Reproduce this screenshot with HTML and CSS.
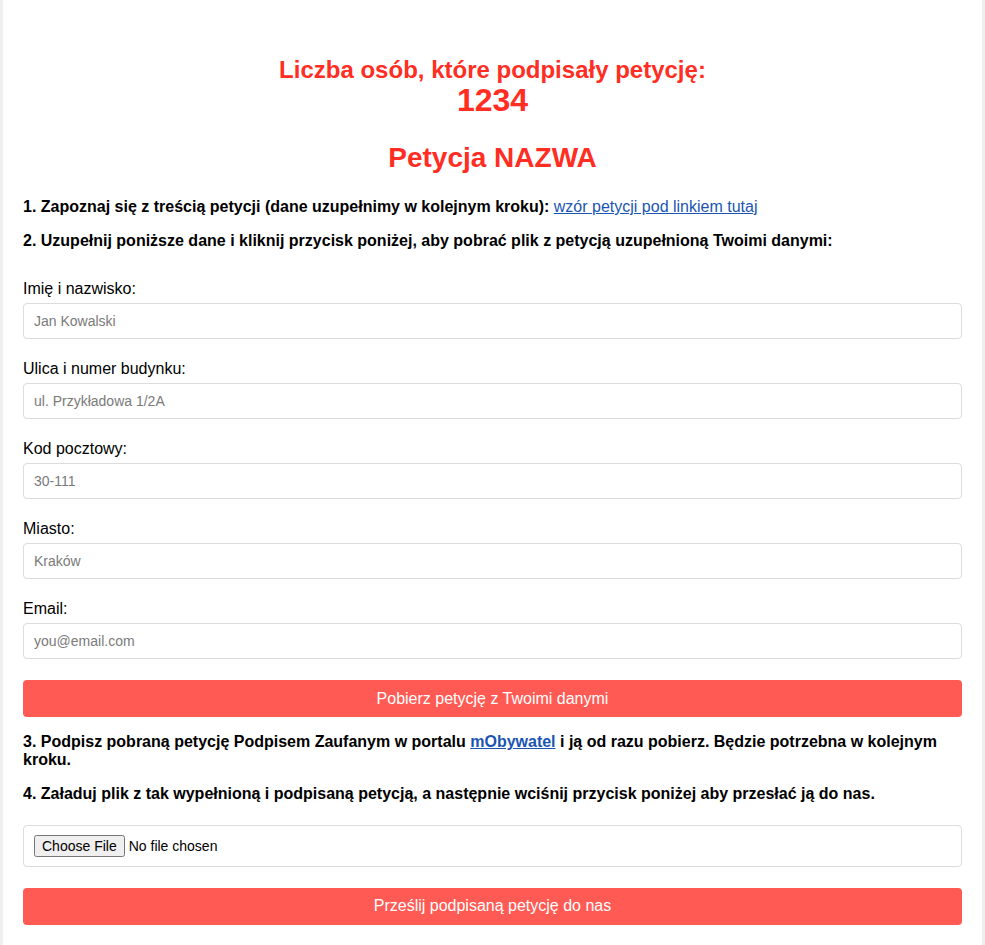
FILE: index.html
```html
<!DOCTYPE html>
<html lang="pl">
<head>
<meta charset="utf-8">
<title>Petycja</title>
<link rel="stylesheet" href="styles.css">
</head>
<body>
<div class="container">
  <div class="counter">
    <div class="counter-label">Liczba osób, które podpisały petycję:</div>
    <div class="counter-value">1234</div>
  </div>
  <h1 class="title">Petycja NAZWA</h1>
  <p class="step step-1">1. Zapoznaj się z treścią petycji (dane uzupełnimy w kolejnym kroku): <a href="#" class="link">wzór petycji pod linkiem tutaj</a></p>
  <p class="step step-2">2. Uzupełnij poniższe dane i kliknij przycisk poniżej, aby pobrać plik z petycją uzupełnioną Twoimi danymi:</p>
  <form class="form">
    <div class="group">
      <label class="label" for="name">Imię i nazwisko:</label>
      <input class="input" id="name" type="text" placeholder="Jan Kowalski">
    </div>
    <div class="group">
      <label class="label" for="street">Ulica i numer budynku:</label>
      <input class="input" id="street" type="text" placeholder="ul. Przykładowa 1/2A">
    </div>
    <div class="group">
      <label class="label" for="zip">Kod pocztowy:</label>
      <input class="input" id="zip" type="text" placeholder="30-111">
    </div>
    <div class="group">
      <label class="label" for="city">Miasto:</label>
      <input class="input" id="city" type="text" placeholder="Kraków">
    </div>
    <div class="group">
      <label class="label" for="email">Email:</label>
      <input class="input" id="email" type="email" placeholder="you@email.com">
    </div>
    <button type="button" class="btn">Pobierz petycję z Twoimi danymi</button>
  </form>
  <p class="step step-3">3. Podpisz pobraną petycję Podpisem Zaufanym w portalu <a href="#" class="link link-bold">mObywatel</a> i ją od razu pobierz. Będzie potrzebna w kolejnym kroku.</p>
  <p class="step step-4">4. Załaduj plik z tak wypełnioną i podpisaną petycją, a następnie wciśnij przycisk poniżej aby przesłać ją do nas.</p>
  <div class="file-box"><input type="file" class="file"></div>
  <button type="button" class="btn btn-send">Prześlij podpisaną petycję do nas</button>
</div>
</body>
</html>
```

FILE: styles.css
```css
html, body {
  margin: 0;
  padding: 0;
}
body {
  background: #efefef;
  font-family: "Liberation Sans", Arial, sans-serif;
  color: #000;
}
.container {
  background: #fff;
  margin: 0 3px;
  padding: 56px 20px 20px;
  min-height: 945px;
  box-sizing: border-box;
}
.counter {
  text-align: center;
  color: #ff2d22;
  font-weight: bold;
}
.counter-label {
  font-size: 24px;
  line-height: 28px;
}
.counter-value {
  font-size: 32px;
  line-height: 32px;
}
.title {
  text-align: center;
  color: #ff2d22;
  font-size: 28px;
  line-height: 32px;
  margin: 26px 0 0;
}
.step {
  font-size: 16px;
  font-weight: bold;
  line-height: 18px;
  margin: 0;
}
.step-1 { margin-top: 24px; }
.step-2 { margin-top: 16px; }
.step-3 { margin-top: 16px; line-height: 18.4px; }
.step-4 { margin-top: 15px; }
.link {
  color: #1a55b4;
  font-weight: normal;
}
.link-bold { font-weight: bold; }
.form {
  margin-top: 30px;
}
.group {
  margin-bottom: 21px;
}
.label {
  display: block;
  font-size: 16px;
  line-height: 18px;
  margin-bottom: 5px;
}
.input {
  display: block;
  width: 100%;
  box-sizing: border-box;
  height: 36px;
  padding: 0 10px;
  border: 1px solid #dcdcdc;
  border-radius: 4px;
  font-family: "Liberation Sans", Arial, sans-serif;
  font-size: 14px;
  color: #333;
  background: #fff;
}
.input::placeholder {
  color: #7a7a7a;
}
.btn {
  display: block;
  width: 100%;
  height: 37px;
  border: none;
  border-radius: 4px;
  background: #ff5a53;
  color: #fff;
  font-family: "Liberation Sans", Arial, sans-serif;
  font-size: 16px;
  cursor: pointer;
}
.file-box {
  margin-top: 22px;
  border: 1px solid #dcdcdc;
  border-radius: 4px;
  padding: 10px;
  height: 42px;
  box-sizing: border-box;
  display: flex;
  align-items: center;
}
.file {
  font-family: "Liberation Sans", Arial, sans-serif;
  font-size: 14px;
}
.btn-send {
  margin-top: 21px;
}
```
